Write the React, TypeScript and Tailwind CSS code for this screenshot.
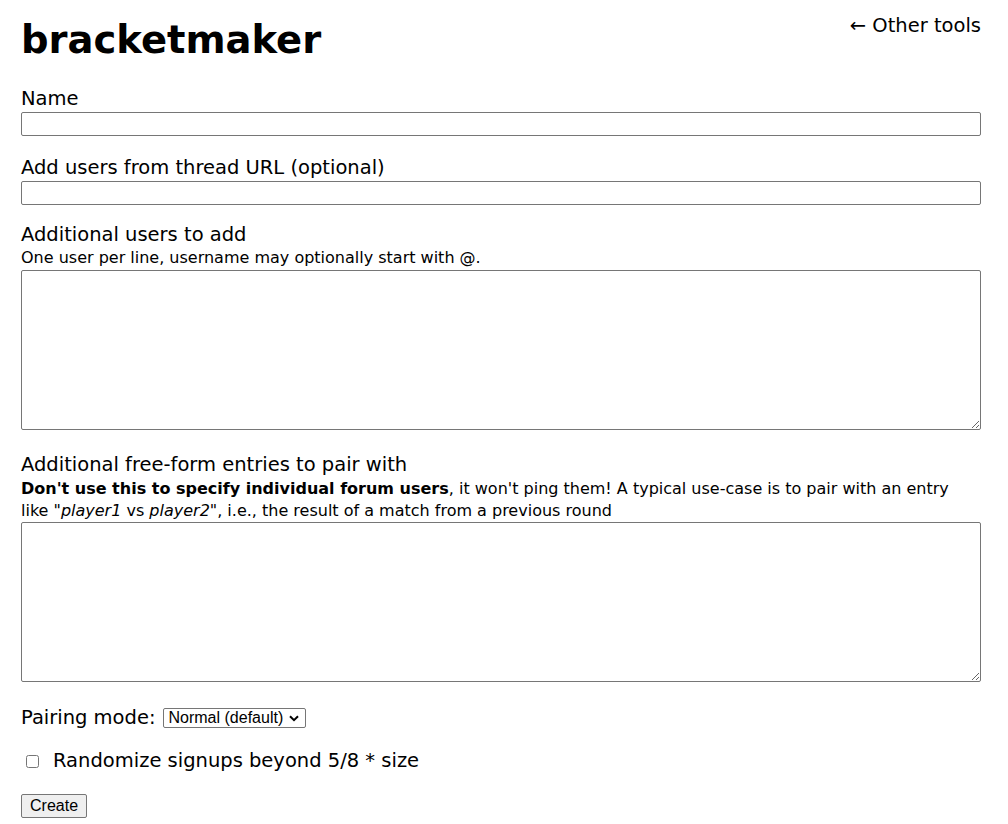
import React from "react";

export default function App() {
  return (
    <div className="min-h-screen bg-white text-black font-['DejaVu_Sans',Verdana,sans-serif] text-[19.5px] leading-[24px]">
      <div className="relative w-[960px] ml-[21px]">
        <a href="#" className="absolute right-0 top-[14px] text-black no-underline">
          ← Other tools
        </a>
        <h1 className="text-[38.5px] font-bold leading-[44px] pt-[18px]">bracketmaker</h1>

        <form className="flex flex-col">
          <label className="mt-[25px]">Name</label>
          <input type="text" className="h-[24px] border border-[#767676] rounded-[2px] mt-[1px] px-1" />

          <label className="mt-[20px]">Add users from thread URL (optional)</label>
          <input type="text" className="h-[24px] border border-[#767676] rounded-[2px] mt-[1px] px-1" />

          <label className="mt-[18px]">Additional users to add</label>
          <p className="text-[16px] leading-[22px]">One user per line, username may optionally start with @.</p>
          <textarea className="h-[160px] border border-[#767676] rounded-[2px] mt-[1px] p-1" />

          <label className="mt-[23px]">Additional free-form entries to pair with</label>
          <p className="text-[16px] leading-[22px] mt-[1px]">
            <b>Don't use this to specify individual forum users</b>, it won't ping them! A typical
            use-case is to pair with an entry like "<i>player1</i> vs <i>player2</i>", i.e., the
            result of a match from a previous round
          </p>
          <textarea className="h-[160px] border border-[#767676] rounded-[2px] p-1" />

          <div className="flex items-center mt-[24px] h-[24px]">
            <span>Pairing mode:</span>
            <div className="relative ml-[7px]">
              <select className="appearance-none block w-[143px] h-[20px] pl-[5px] pr-[20px] py-0 leading-none border border-[#767676] rounded-[2px] font-['Liberation_Sans',Arial,sans-serif] text-[16px]">
                <option>Normal (default)</option>
              </select>
              <svg
                className="pointer-events-none absolute left-[126px] top-[7px]"
                width="10"
                height="7"
                viewBox="0 0 10 7"
                fill="none"
              >
                <path d="M1 1.2 L5 5.2 L9 1.2" stroke="#000" strokeWidth="2" />
              </svg>
            </div>
          </div>

          <label className="flex items-center mt-[19px] h-[24px]">
            <input type="checkbox" className="ml-[5px] w-[13px] h-[13px]" />
            <span className="ml-[14px]">Randomize signups beyond 5/8 * size</span>
          </label>

          <div className="mt-[20px]">
            <button
              type="button"
              className="h-[24px] px-[8px] bg-[#efefef] border border-[#767676] rounded-[2px] leading-none font-['Liberation_Sans',Arial,sans-serif] text-[16px]"
            >
              Create
            </button>
          </div>
        </form>
      </div>
    </div>
  );
}
